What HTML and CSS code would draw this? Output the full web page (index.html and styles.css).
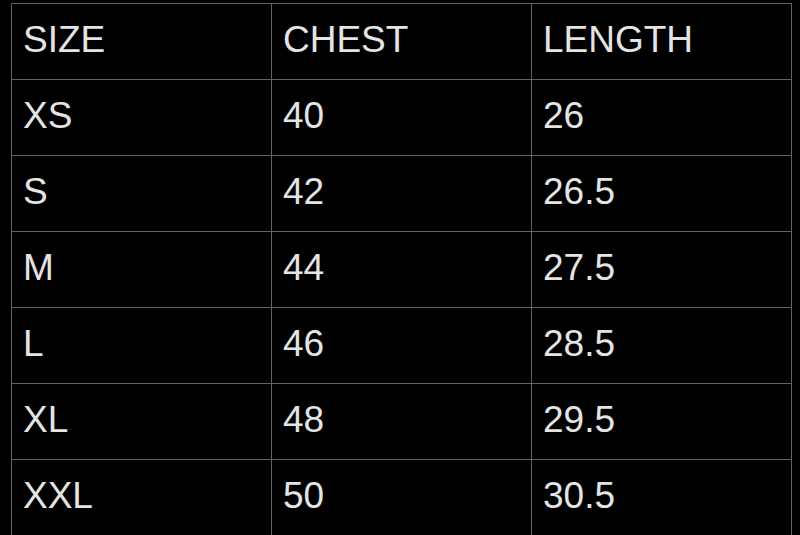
FILE: index.html
```html
<!DOCTYPE html>
<html>
<head>
<meta charset="utf-8">
<link rel="stylesheet" href="styles.css">
</head>
<body>
<table class="size-table">
  <tr><td>SIZE</td><td>CHEST</td><td>LENGTH</td></tr>
  <tr><td>XS</td><td>40</td><td>26</td></tr>
  <tr><td>S</td><td>42</td><td>26.5</td></tr>
  <tr><td>M</td><td>44</td><td>27.5</td></tr>
  <tr><td>L</td><td>46</td><td>28.5</td></tr>
  <tr><td>XL</td><td>48</td><td>29.5</td></tr>
  <tr><td>XXL</td><td>50</td><td>30.5</td></tr>
</table>
</body>
</html>
```
FILE: styles.css
```css
html, body {
  margin: 0;
  padding: 0;
  background: #000;
  overflow: hidden;
}
.size-table {
  margin: 3px 0 0 11px;
  border-collapse: collapse;
  table-layout: fixed;
  width: 781px;
  font-family: "Liberation Sans", Arial, sans-serif;
  font-size: 37px;
  color: #e4e4e4;
}
.size-table td {
  width: 260px;
  height: 76px;
  box-sizing: border-box;
  border: 1px solid #626262;
  padding: 16px 0 0 11px;
  vertical-align: top;
  line-height: 40px;
}
```
